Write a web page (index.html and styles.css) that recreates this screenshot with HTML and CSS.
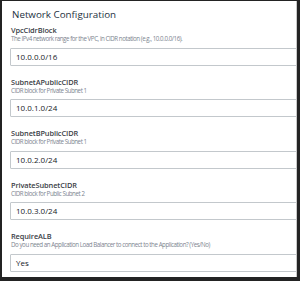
FILE: index.html
```html
<!DOCTYPE html>
<html>
<head>
<meta charset="utf-8">
<link rel="stylesheet" href="styles.css">
</head>
<body>
<div class="frame">
  <h1 class="title">Network Configuration</h1>
  <div class="field">
    <div class="label">VpcCidrBlock</div>
    <div class="desc">The IPv4 network range for the VPC, in CIDR notation (e.g., 10.0.0.0/16).</div>
    <div class="box">10.0.0.0/16</div>
  </div>
  <div class="field">
    <div class="label">SubnetAPublicCIDR</div>
    <div class="desc">CIDR block for Private Subnet 1</div>
    <div class="box">10.0.1.0/24</div>
  </div>
  <div class="field">
    <div class="label">SubnetBPublicCIDR</div>
    <div class="desc">CIDR block for Private Subnet 1</div>
    <div class="box">10.0.2.0/24</div>
  </div>
  <div class="field">
    <div class="label">PrivateSubnetCIDR</div>
    <div class="desc">CIDR block for Public Subnet 2</div>
    <div class="box">10.0.3.0/24</div>
  </div>
  <div class="field">
    <div class="label">RequireALB</div>
    <div class="desc">Do you need an Application Load Balancer to connect to the Application? (Yes/No)</div>
    <div class="box">Yes</div>
  </div>
</div>
</body>
</html>
```
FILE: styles.css
```css
html, body {
  margin: 0;
  padding: 0;
  background: #232323;
}
body {
  width: 300px;
  height: 281px;
  overflow: hidden;
  font-family: "Open Sans", "Liberation Sans", sans-serif;
}
.frame {
  margin: 1px 3px 0 2px;
  height: 276px;
  background: #ffffff;
  border-right: 1px solid #c9c9c9;
  box-sizing: border-box;
  padding: 6.6px 0 0 8px;
  overflow: hidden;
}
.title {
  margin: 0 0 0 2px;
  font-size: 9.8px;
  line-height: 13px;
  font-weight: 400;
  color: #232f3e;
}
.field {
  height: 51.5px;
}
.field:first-of-type {
  margin-top: 4.8px;
}
.label {
  margin-left: 1px;
  font-size: 7.4px;
  line-height: 10px;
  font-weight: 600;
  color: #3b4046;
  letter-spacing: -0.1px;
}
.desc {
  margin-left: 1px;
  font-size: 6.2px;
  line-height: 8px;
  color: #7d8590;
  letter-spacing: -0.45px;
}
.box {
  margin-top: 4.6px;
  margin-right: -2px;
  height: 18px;
  box-sizing: border-box;
  border: 1px solid #c3c8cc;
  border-radius: 1px;
  padding-left: 5px;
  font-size: 8px;
  line-height: 16px;
  color: #16191f;
}
```
